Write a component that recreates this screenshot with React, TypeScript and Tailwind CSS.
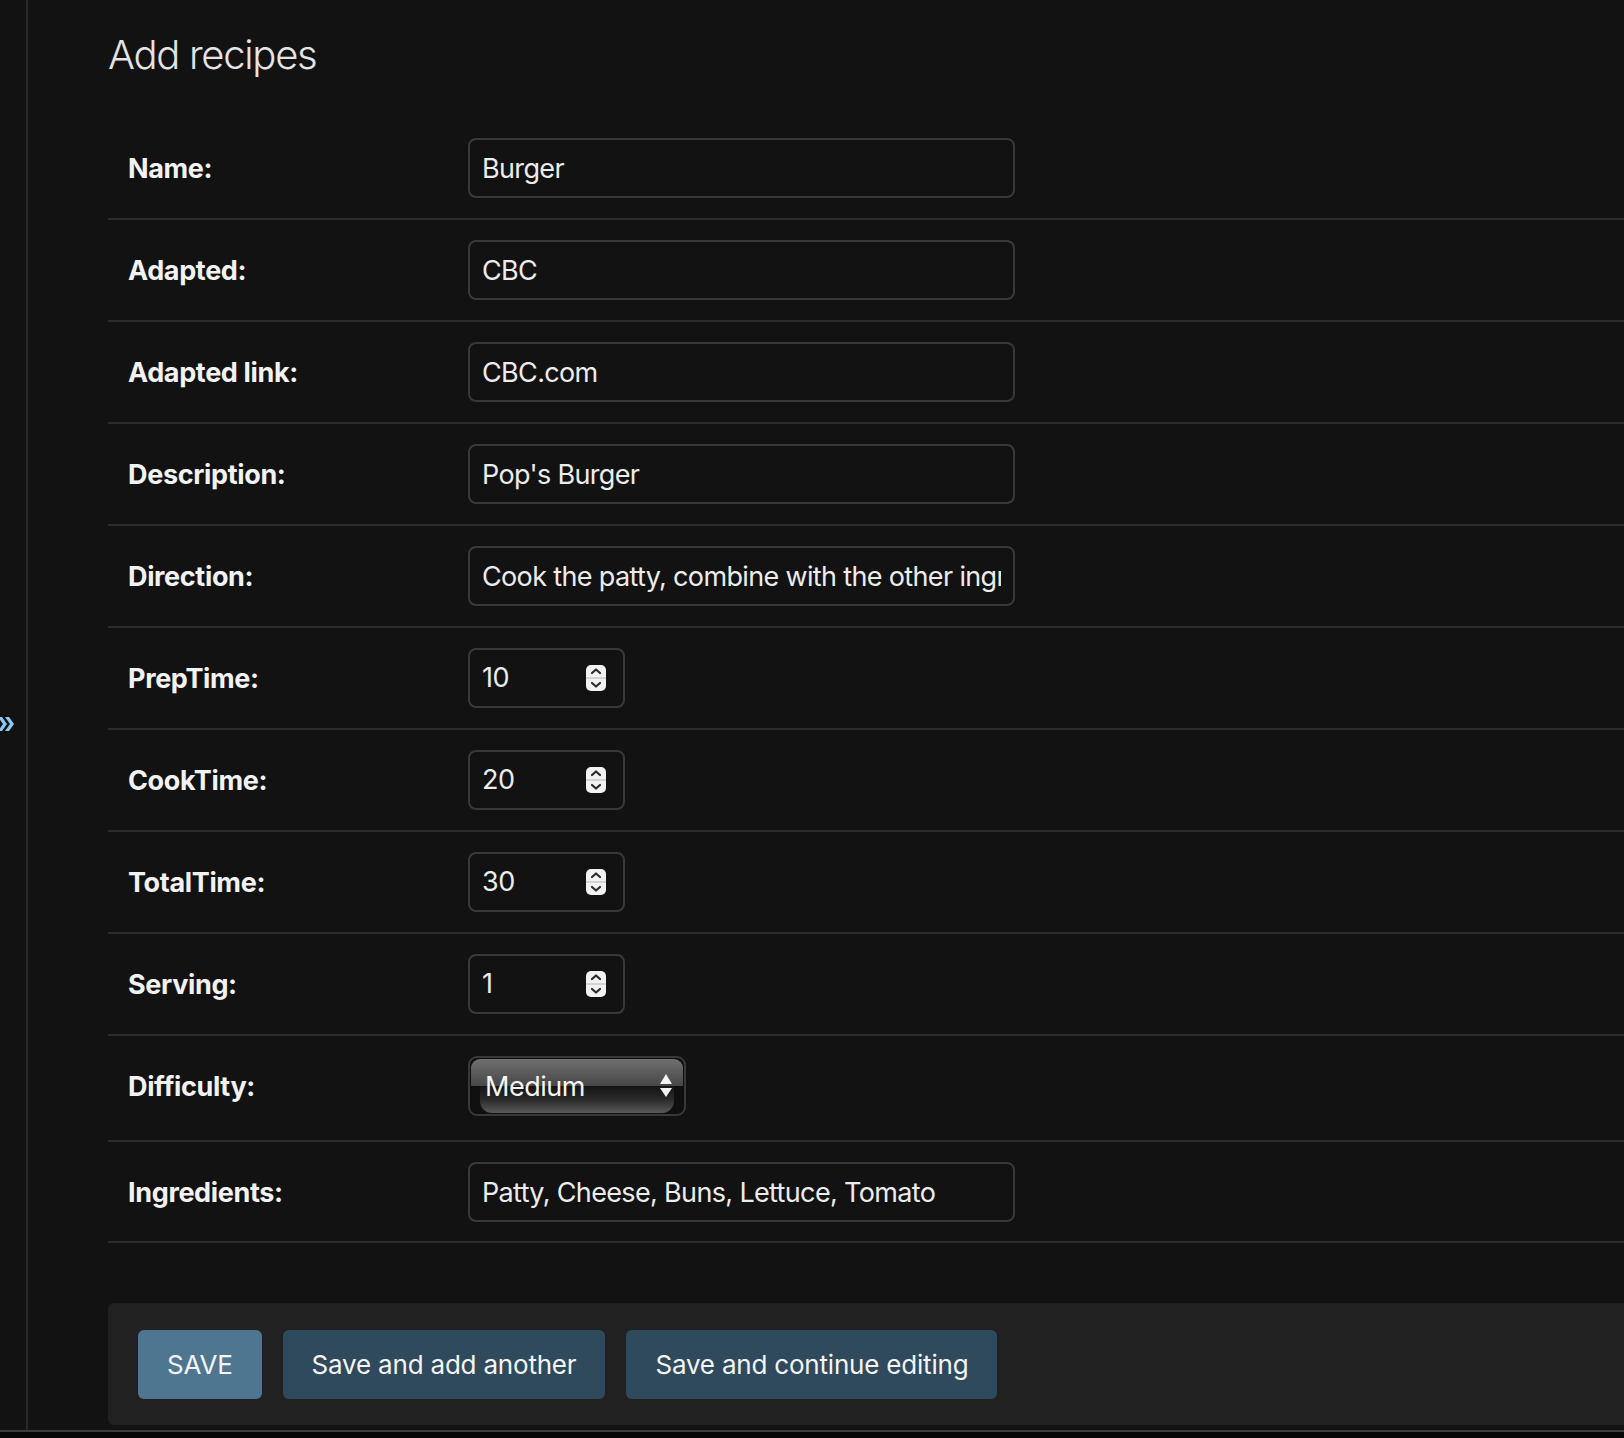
import React from "react";

const font = { fontFamily: "Inter, 'Noto Sans', sans-serif" };

function Label({ children }: { children: React.ReactNode }) {
  return (
    <div className="w-[340px] shrink-0 text-[27px] font-bold tracking-[-0.35px] text-[#f2f2f2] leading-none">
      {children}
    </div>
  );
}

function TextRow({ label, value, last }: { label: string; value: string; last?: boolean }) {
  return (
    <div className={last ? "flex items-center border-b-2 border-[#2c2c2c] pl-[20px] pt-5 pb-[19px]" : "flex items-center border-b-2 border-[#2c2c2c] pl-[20px] pt-5 pb-5"}>
      <Label>{label}</Label>
      <input
        readOnly
        value={value}
        className="h-[60px] w-[547px] rounded-[8px] border-2 border-[#393939] bg-[#121212] pl-[12px] pr-[12px] text-[27px] tracking-[-0.65px] text-[#ececec] outline-none"
        style={font}
      />
    </div>
  );
}

function Spinner() {
  return (
    <svg width="20" height="26" viewBox="0 0 20 26">
      <rect x="0" y="0" width="20" height="26" rx="5" fill="#f2f2f2" />
      <line x1="0" y1="13" x2="20" y2="13" stroke="#c8c8c8" strokeWidth="1.5" />
      <path d="M6 8 L10 4.5 L14 8" fill="none" stroke="#2a2a2a" strokeWidth="2.2" strokeLinecap="round" strokeLinejoin="round" />
      <path d="M6 18 L10 21.5 L14 18" fill="none" stroke="#2a2a2a" strokeWidth="2.2" strokeLinecap="round" strokeLinejoin="round" />
    </svg>
  );
}

function NumberRow({ label, value }: { label: string; value: string }) {
  return (
    <div className="flex items-center border-b-2 border-[#2c2c2c] pl-[20px] pt-5 pb-5">
      <Label>{label}</Label>
      <div className="flex h-[60px] w-[157px] items-center justify-between rounded-[8px] border-2 border-[#393939] bg-[#121212] pl-[12px] pr-[17px] text-[27px] tracking-[-0.5px] text-[#ececec]">
        <span>{value}</span>
        <Spinner />
      </div>
    </div>
  );
}

function SelectRow() {
  return (
    <div className="flex items-center border-b-2 border-[#2c2c2c] pl-[20px] pt-5 pb-[24px]">
      <Label>Difficulty:</Label>
      <div className="relative h-[60px] w-[218px] overflow-hidden rounded-[9px] border-2 border-[#393939] bg-[#0f0f0f]">
        <div className="absolute left-[1px] right-[1px] top-[1px] h-[27px] rounded-t-[9px] bg-gradient-to-b from-[#707070] to-[#474747]" />
        <div className="absolute left-[10px] right-[10px] top-[28px] bottom-[1px] rounded-b-[12px] bg-gradient-to-b from-[#151515] via-[#2a2a2a] to-[#5a5a5a]" />
        <div className="relative flex h-full items-center justify-between pl-[15px] pr-[12px]">
          <span className="text-[27px] tracking-[-0.5px] text-[#f4f4f4] leading-none">Medium</span>
          <svg width="12" height="24" viewBox="0 0 12 24">
            <path d="M6 0 L12 10 L0 10 Z" fill="#f4f4f4" />
            <path d="M0 14 L12 14 L6 23 Z" fill="#f4f4f4" />
          </svg>
        </div>
      </div>
    </div>
  );
}

export default function App() {
  return (
    <div className="flex min-h-[1438px] flex-col overflow-hidden bg-[#121212]" style={font}>
      <div className="flex h-[1430px]">
        <div className="relative w-[28px] shrink-0 border-r-2 border-[#292929]">
          <div className="absolute left-[-3px] top-[715px]">
            <svg width="18" height="18" viewBox="0 0 18 18">
              <path d="M1 2 L5 2 L10 9 L5 16 L1 16 L6 9 Z" fill="#8cc9f0" />
              <path d="M8 2 L12 2 L17 9 L12 16 L8 16 L13 9 Z" fill="#8cc9f0" />
            </svg>
          </div>
        </div>
        <div className="flex-1 pl-[80px]">
          <div className="mr-[-60px]">
            <h1 className="pt-[31px] text-[40px] font-light leading-[48px] tracking-[-1.3px] text-[#e4e4e4]">Add recipes</h1>
            <div className="mt-[39px]">
              <TextRow label="Name:" value="Burger" />
              <TextRow label="Adapted:" value="CBC" />
              <TextRow label="Adapted link:" value="CBC.com" />
              <TextRow label="Description:" value="Pop's Burger" />
              <TextRow label="Direction:" value="Cook the patty, combine with the other ingredients and serve" />
              <NumberRow label="PrepTime:" value="10" />
              <NumberRow label="CookTime:" value="20" />
              <NumberRow label="TotalTime:" value="30" />
              <NumberRow label="Serving:" value="1" />
              <SelectRow />
              <TextRow label="Ingredients:" value="Patty, Cheese, Buns, Lettuce, Tomato" last />
            </div>
            <div className="mt-[60px] flex h-[122px] items-center gap-[21px] rounded-[6px] bg-[#212121] pl-[30px]">
              <button className="h-[69px] rounded-[6px] bg-[#4f7690] px-[29px] text-[26px] tracking-[-0.2px] text-[#f4f4f4]">SAVE</button>
              <button className="h-[69px] rounded-[6px] bg-[#2f4a5c] px-[29px] text-[26px] tracking-[-0.2px] text-[#f4f4f4]">Save and add another</button>
              <button className="h-[69px] rounded-[6px] bg-[#2f4a5c] px-[29px] text-[26px] tracking-[-0.2px] text-[#f4f4f4]">Save and continue editing</button>
            </div>
          </div>
        </div>
      </div>
      <div className="h-[2px] bg-[#3d3d3d]" />
      <div className="h-[6px] bg-[#070707]" />
    </div>
  );
}
